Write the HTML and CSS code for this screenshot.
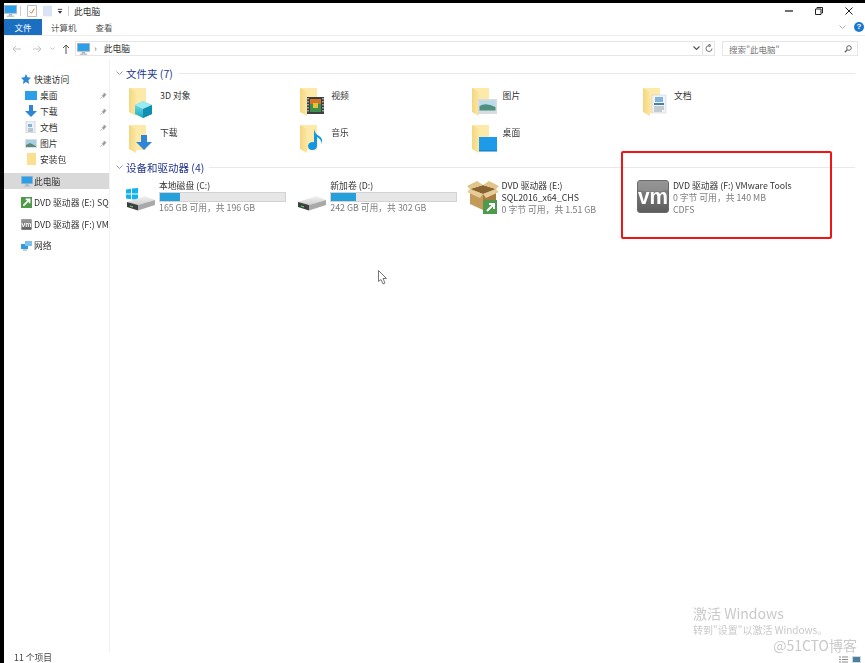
FILE: index.html
```html
<!DOCTYPE html>
<html lang="zh-CN">
<head>
<meta charset="utf-8">
<title>此电脑</title>
<link rel="stylesheet" href="styles.css">
</head>
<body>
<svg class="defs" width="0" height="0" aria-hidden="true">
  <defs>
    <linearGradient id="fy" x1="0" y1="0" x2="1" y2="0"><stop offset="0" stop-color="#f4d67f"/><stop offset="1" stop-color="#fbe6a2"/></linearGradient>
    <linearGradient id="cube" x1="0" y1="0" x2="0" y2="1"><stop offset="0" stop-color="#7fe3ee"/><stop offset="1" stop-color="#18a9c4"/></linearGradient>
    <linearGradient id="vmg" x1="0" y1="0" x2="0" y2="1"><stop offset="0" stop-color="#8a8a8a"/><stop offset="1" stop-color="#5c5c5c"/></linearGradient>
    <linearGradient id="dr" x1="0" y1="0" x2="0" y2="1"><stop offset="0" stop-color="#f2f2f2"/><stop offset="1" stop-color="#cfcfcf"/></linearGradient>
    <symbol id="folder" viewBox="0 0 26 30">
      <path d="M1 0h17v25H7z" fill="#fdeaa9"/>
      <path d="M1 0l7 4v24l-7-4z" fill="url(#fy)"/>
    </symbol>
    <symbol id="pc" viewBox="0 0 14 13">
      <path d="M0 0h14v9.500H0z" fill="#9fb4c6"/>
      <path d="M1 1h12v7.500H1z" fill="#2c9fe8"/>
      <path d="M5 10h4v1.500H5z" fill="#8fa3b4"/>
      <path d="M3 11.500h8V13H3z" fill="#bcc8d2"/>
    </symbol>
    <symbol id="pin" viewBox="0 0 8 8">
      <path d="M4.500.5l3 3-1.200.5-1.300 1.500-.3 1.500-3-3 1.500-.3L4 2.400z" fill="#9a9a9a"/>
      <path d="M2 6L.5 7.500" stroke="#9a9a9a"/>
    </symbol>
    <symbol id="drive" viewBox="0 0 30 16">
      <path d="M1 7L19 1l10 4-17 5z" fill="url(#dr)"/>
      <path d="M1 7l11 3v5.500L1 12z" fill="#3f3f3f"/>
      <path d="M12 10l17-5v5L12 15.500z" fill="#a9a9a9"/>
      <path d="M4 10.500l3 .8v1.300l-3-.8z" fill="#4fd06a"/>
    </symbol>
    <symbol id="vm" viewBox="0 0 32 33">
      <rect x=".5" y=".5" width="31" height="32" rx="2.500" fill="url(#vmg)" stroke="#6a6a6a"/>
      <path d="M1 1h30v9q-15 3-30 0z" fill="#a3a3a3" opacity=".45"/>
      <text x="16" y="24" text-anchor="middle" font-family="Liberation Sans" font-weight="700" font-size="22" fill="#ffffff" textLength="30" lengthAdjust="spacingAndGlyphs">vm</text>
    </symbol>
    <symbol id="box" viewBox="0 0 32 34">
      <path d="M3 9l13 5v16L3 24z" fill="#c49a5a"/>
      <path d="M16 14l13-5v15l-13 6z" fill="#a67c3f"/>
      <path d="M3 9l13-4 13 4-13 5z" fill="#8a6430"/>
      <path d="M3 9L0 6l10-5 6 4zM29 9l3-3-10-5-6 4z" fill="#e2c48a"/>
      <path d="M3 9l13 5-3 4L0 12zM29 9L16 14l3 4 13-6z" fill="#e6cc98"/>
      <rect x="16" y="20" width="14" height="14" fill="#4f9a4a"/>
      <path d="M20 31l6-6M22 24h5v5" stroke="#ffffff" stroke-width="2" fill="none"/>
    </symbol>
    <symbol id="small-arrow" viewBox="0 0 14 14">
      <rect width="14" height="14" fill="#4f9a4a"/>
      <path d="M3 11l7-7M6 3h5v5" stroke="#ffffff" stroke-width="2" fill="none"/>
    </symbol>
  </defs>
</svg>

<div class="blackTop"></div>
<div class="frame">
  <div class="blackLeft"></div>
  <main class="window">
    <header class="titlebar">
      <svg class="qa-pc" width="13" height="12"><use href="#pc"/></svg>
      <span class="sep"></span>
      <svg class="qa-note" width="10" height="12" viewBox="0 0 11 13"><path d="M.5.5h10v12H.5z" fill="#fff" stroke="#b5b5b5"/><path d="M3 7l2 2 3-5" stroke="#d9622b" fill="none"/></svg>
      <svg class="qa-doc" width="9" height="12" viewBox="0 0 11 13"><path d="M0 0h11v13H0z" fill="#d9e3f3"/></svg>
      <svg class="qa-drop" width="6" height="7" viewBox="0 0 7 7"><path d="M1 1h5" stroke="#333"/><path d="M1 3h5L3.500 6z" fill="#333"/></svg>
      <span class="sep sep-2"></span>
      <span class="title">此电脑</span>
      <div class="winctl">
        <svg width="8" height="2" viewBox="0 0 8 2"><path d="M0 1h8" stroke="#222" stroke-width="1.300"/></svg>
        <svg width="8" height="8" viewBox="0 0 8 8"><path d="M2 1.500V.5h5.500V6H6.500M.5 2h5.500v5.500H.5z" fill="none" stroke="#222"/></svg>
        <svg width="8" height="8" viewBox="0 0 8 8"><path d="M.5.500l7 7M7.500.500l-7 7" stroke="#222"/></svg>
      </div>
    </header>
    <nav class="tabs">
      <span class="tab tab-file">文件</span>
      <span class="tab tab-computer">计算机</span>
      <span class="tab tab-view">查看</span>
      <svg class="collapse" width="7" height="5" viewBox="0 0 7 5"><path d="M.5.500l3 3 3-3" fill="none" stroke="#b0b0b0"/></svg>
      <span class="help">?</span>
    </nav>
    <div class="toolbar">
      <svg class="tb-back" width="10" height="8" viewBox="0 0 10 8"><path d="M9 4H1M4 1L1 4l3 3" fill="none" stroke="#c4c4c4"/></svg>
      <svg class="tb-fwd" width="10" height="8" viewBox="0 0 10 8"><path d="M1 4h8M6 1l3 3-3 3" fill="none" stroke="#c4c4c4"/></svg>
      <svg class="tb-down" width="5" height="4" viewBox="0 0 5 4"><path d="M.5.500l2 2 2-2" fill="none" stroke="#c4c4c4"/></svg>
      <svg class="tb-up" width="8" height="10" viewBox="0 0 8 10"><path d="M4 10V1M1 4l3-3 3 3" fill="none" stroke="#555"/></svg>
      <div class="address">
        <svg width="13" height="12"><use href="#pc"/></svg>
        <span class="crumb-sep">›</span>
        <span class="crumb">此电脑</span>
        <svg class="addr-drop" width="7" height="5" viewBox="0 0 7 5"><path d="M.5.500l3 3 3-3" fill="none" stroke="#555" stroke-width="1.200"/></svg>
        <span class="addr-refresh"><svg width="8" height="9" viewBox="0 0 8 9"><path d="M4 1.500a3 3 0 1 0 3 3M4 0v3l2-1.500z" fill="none" stroke="#777"/></svg></span>
      </div>
      <div class="search">
        <span>搜索"此电脑"</span>
        <svg width="8" height="8" viewBox="0 0 8 8"><circle cx="5" cy="3" r="2.300" fill="none" stroke="#666"/><path d="M3.300 4.700L.8 7.300" stroke="#666" stroke-width="1.300"/></svg>
      </div>
    </div>
    <div class="body">
      <aside class="nav">
        <div class="nav-row lvl1">
          <svg class="nav-ic" width="10" height="10" viewBox="0 0 10 10"><path d="M5 0l1.500 3.300L10 3.800 7.400 6.200 8.100 10 5 8.100 1.900 10l.7-3.800L0 3.800l3.500-.5z" fill="#2f86d6"/></svg>
          <span>快速访问</span>
        </div>
        <div class="nav-row lvl2">
          <svg class="nav-ic" width="12" height="9" viewBox="0 0 12 9"><path d="M0 0h12v9H0z" fill="#2c9fe8"/></svg>
          <span>桌面</span>
          <svg class="pin" width="7" height="7"><use href="#pin"/></svg>
        </div>
        <div class="nav-row lvl2">
          <svg class="nav-ic" width="12" height="12" viewBox="0 0 12 12"><path d="M4 0h4v6h4l-6 6-6-6h4z" fill="#2f86d6"/></svg>
          <span>下载</span>
          <svg class="pin" width="7" height="7"><use href="#pin"/></svg>
        </div>
        <div class="nav-row lvl2">
          <svg class="nav-ic" width="11" height="12" viewBox="0 0 11 12"><path d="M1 0h9v12H1z" fill="#eef1f5" stroke="#b5bdc6" stroke-width=".6"/><path d="M3 3h4v3H3z" fill="#7fb4dd"/><path d="M3 8h5M3 10h5" stroke="#8a99a8"/></svg>
          <span>文档</span>
          <svg class="pin" width="7" height="7"><use href="#pin"/></svg>
        </div>
        <div class="nav-row lvl2">
          <svg class="nav-ic" width="12" height="9" viewBox="0 0 12 9"><path d="M0 0h12v9H0z" fill="#d6dde3"/><path d="M1 1h10v5H1z" fill="#a9cfe6"/><path d="M1 6l4-2 6 3v1H1z" fill="#5f8a78"/></svg>
          <span>图片</span>
          <svg class="pin" width="7" height="7"><use href="#pin"/></svg>
        </div>
        <div class="nav-row lvl2">
          <svg class="nav-ic ic-pack" width="9" height="12" viewBox="0 0 9 12"><path d="M0 0h9v12H0z" fill="#fbe08f"/></svg>
          <span>安装包</span>
        </div>
        <div class="nav-row lvl1 selected">
          <svg class="nav-ic" width="12" height="11"><use href="#pc"/></svg>
          <span>此电脑</span>
        </div>
        <div class="nav-row lvl1 dvd-e">
          <svg class="nav-ic" width="11" height="11"><use href="#small-arrow"/></svg>
          <span>DVD 驱动器 (E:) SQL2016_x64_CHS</span>
        </div>
        <div class="nav-row lvl1 dvd-f">
          <svg class="nav-ic" width="11" height="11" viewBox="0 0 32 33"><use href="#vm"/></svg>
          <span>DVD 驱动器 (F:) VMware Tools</span>
        </div>
        <div class="nav-row lvl1 net">
          <svg class="nav-ic" width="11" height="11" viewBox="0 0 11 11"><path d="M0 4h7v5H0z" fill="#2f9be0"/><path d="M4 1h7v5H4z" fill="#7cc0ec"/><path d="M2 10h4" stroke="#8a99a8"/></svg>
          <span>网络</span>
        </div>
      </aside>
      <section class="content">
        <h2 class="group">
          <svg width="7" height="5" viewBox="0 0 7 5"><path d="M.5.500l3 3 3-3" fill="none" stroke="#9a9a9a"/></svg>
          <span class="group-name">文件夹 (7)</span><span class="group-line"></span>
        </h2>
        <div class="grid folders">
          <div class="tile"><svg class="fi" width="26" height="30" viewBox="0 0 26 30"><use href="#folder" width="26" height="30"/><path d="M7 17l8-4 9 4v9l-9 4-8-4z" fill="url(#cube)"/><path d="M7 17l8 4 9-4-9-4z" fill="#9beaf0"/><path d="M15 21v9l9-4v-9z" fill="#0f8eb0"/></svg><span class="label">3D 对象</span></div>
          <div class="tile"><svg class="fi" width="26" height="30" viewBox="0 0 26 30"><use href="#folder" width="26" height="30"/><rect x="8" y="9" width="17" height="17" fill="#3b3f3f"/><path d="M11 11h11v13H11z" fill="#3f8f4a"/><path d="M11 11h11v5H11z" fill="#d4762a"/><path d="M14 15h5v5h-5z" fill="#e6c23a"/><path d="M9 10v15M24 10v15" stroke="#c8c8c8" stroke-width="1.400" stroke-dasharray="1.500 1.500"/></svg><span class="label">视频</span></div>
          <div class="tile"><svg class="fi" width="26" height="30" viewBox="0 0 26 30"><use href="#folder" width="26" height="30"/><rect x="7" y="11" width="19" height="15" fill="#d9dcdf"/><rect x="8.500" y="12.500" width="16" height="10" fill="#bcdbe8"/><path d="M8.500 18q6-4 16 1v3.500h-16z" fill="#4f8f7e"/></svg><span class="label">图片</span></div>
          <div class="tile"><svg class="fi" width="26" height="30" viewBox="0 0 26 30"><use href="#folder" width="26" height="30"/><path d="M10 7h14v18H10z" fill="#f1f3f6" stroke="#c3c9cf" stroke-width=".5"/><path d="M13 9h8v5h-8z" fill="#7fb4dd"/><path d="M12 15h10v2H12z" fill="#4a7f9e"/><path d="M12 19h10M12 21h10M12 23h8" stroke="#97a3ae"/></svg><span class="label">文档</span></div>
          <div class="tile"><svg class="fi" width="26" height="30" viewBox="0 0 26 30"><use href="#folder" width="26" height="30"/><path d="M13 10h6v7h5l-8 8-8-8h5z" fill="#2f86d6"/></svg><span class="label">下载</span></div>
          <div class="tile"><svg class="fi" width="26" height="30" viewBox="0 0 26 30"><use href="#folder" width="26" height="30"/><path d="M18 4v17a4.500 4 0 1 1-3-3.700V4q1 5 5 7t3 8q-1-5-5-7z" fill="#1097e6"/></svg><span class="label">音乐</span></div>
          <div class="tile"><svg class="fi" width="26" height="30" viewBox="0 0 26 30"><use href="#folder" width="26" height="30"/><path d="M8 12h19v14H8z" fill="#1e9be8"/><path d="M8 26h19" stroke="#0d75bd"/></svg><span class="label">桌面</span></div>
        </div>
        <h2 class="group group-2">
          <svg width="7" height="5" viewBox="0 0 7 5"><path d="M.5.500l3 3 3-3" fill="none" stroke="#9a9a9a"/></svg>
          <span class="group-name">设备和驱动器 (4)</span><span class="group-line"></span>
        </h2>
        <div class="grid drives">
          <div class="drive">
            <div class="dicon">
              <svg class="winlogo" width="12" height="12" viewBox="0 0 12 12"><path d="M0 1.500l5-.8V5.500H0zM6 .6L12 0v5.500H6zM0 6.500h5v4.800l-5-.8zM6 6.500h6V12l-6-.8z" fill="#12b3ea"/></svg>
              <svg class="dsvg" width="30" height="16"><use href="#drive"/></svg>
            </div>
            <div class="dtext">
              <div class="dname">本地磁盘 (C:)</div>
              <div class="bar"><span class="fill fill-c"></span></div>
              <div class="dsub">165 GB 可用，共 196 GB</div>
            </div>
          </div>
          <div class="drive">
            <div class="dicon">
              <svg class="dsvg" width="30" height="16"><use href="#drive"/></svg>
            </div>
            <div class="dtext">
              <div class="dname">新加卷 (D:)</div>
              <div class="bar"><span class="fill fill-d"></span></div>
              <div class="dsub">242 GB 可用，共 302 GB</div>
            </div>
          </div>
          <div class="drive">
            <div class="dicon"><svg class="box" width="32" height="34"><use href="#box"/></svg></div>
            <div class="dtext lines">
              <div class="dname">DVD 驱动器 (E:)</div>
              <div class="dname">SQL2016_x64_CHS</div>
              <div class="dsub">0 字节 可用，共 1.51 GB</div>
            </div>
          </div>
          <div class="drive">
            <div class="dicon"><svg class="vmi" width="32" height="33"><use href="#vm"/></svg></div>
            <div class="dtext lines">
              <div class="dname">DVD 驱动器 (F:) VMware Tools</div>
              <div class="dsub">0 字节 可用，共 140 MB</div>
              <div class="dsub">CDFS</div>
            </div>
          </div>
        </div>
      </section>
    </div>
    <footer class="status">11 个项目</footer>
  </main>
</div>

<div class="redbox"></div>
<svg class="cursor" width="10" height="15" viewBox="0 0 10 15"><path d="M.5.500v11l2.500-2 2 4.500 2-1-2-4.500h3.500z" fill="#fff" stroke="#777"/></svg>
<div class="watermark">
  <div class="wm-1">激活 Windows</div>
  <div class="wm-2">转到"设置"以激活 Windows。</div>
  <div class="wm-3">@51CTO博客</div>
</div>
<div class="viewbtns">
  <svg width="9" height="7" viewBox="0 0 9 7"><path d="M0 1h2M3 1h6M0 3.500h2M3 3.500h6M0 6h2M3 6h6" stroke="#8a8a8a"/></svg>
  <svg width="9" height="7" viewBox="0 0 9 7"><path d="M0 0h9v7H0z" fill="#d2d8de"/><path d="M1 1h7v5H1z" fill="#4a7f9e"/></svg>
</div>
</body>
</html>
```

FILE: styles.css
```css
* { box-sizing: border-box; }
html, body { margin: 0; padding: 0; height: 100%; overflow: hidden; background: #fff; }
body {
  position: relative;
  width: 865px;
  height: 663px;
  font-family: "Noto Sans CJK SC", "Liberation Sans", sans-serif;
  font-size: 9px;
  color: #333;
}
.defs { position: absolute; }
svg { display: block; flex: none; }
.blackTop { height: 3px; background: #000; }
.frame { display: flex; height: 660px; filter: blur(.4px); }
.blackLeft { width: 4px; background: #000; flex: none; }
.window { flex: 1; display: flex; flex-direction: column; min-width: 0; background: #fff; }

.titlebar { height: 16px; display: flex; align-items: center; }
.sep { width: 1px; height: 10px; background: #cfcfcf; margin-left: 3px; }
.qa-note { margin-left: 6px; }
.qa-doc { margin-left: 6px; }
.qa-drop { margin-left: 5px; }
.sep-2 { margin-left: 5px; }
.title { margin-left: 5px; font-size: 8.800px; }
.winctl { margin-left: auto; display: flex; align-items: center; gap: 22px; margin-right: 12px; }

.tabs { height: 17px; display: flex; align-items: center; border-bottom: 1px solid #ececec; }
.tab { font-size: 8.500px; color: #555; }
.tab-file { width: 38px; height: 16px; background: #1a6fc0; color: #fff; text-align: center; line-height: 16px; }
.tab-computer { margin-left: 9px; }
.tab-view { margin-left: 19px; }
.collapse { margin-left: auto; margin-right: 8px; }
.help { width: 10px; height: 10px; margin-right: 1px; border-radius: 50%; background: #1a78d2; color: #fff; font: 700 8px/10px "Liberation Sans", sans-serif; text-align: center; }

.toolbar { height: 24px; display: flex; align-items: center; padding-top: 1px; }
.tb-back { margin-left: 8px; }
.tb-fwd { margin-left: 10px; }
.tb-down { margin-left: 8px; }
.tb-up { margin-left: 7px; }
.address { margin-left: 5px; width: 640px; height: 15px; border: 1px solid #e6e6e6; display: flex; align-items: center; padding-left: 1px; }
.crumb-sep { margin-left: 4px; color: #777; font-size: 9px; }
.crumb { margin-left: 7px; font-size: 8.800px; }
.addr-drop { margin-left: auto; margin-right: 2px; }
.addr-refresh { width: 12px; height: 13px; border-left: 1px solid #e6e6e6; display: flex; align-items: center; justify-content: center; }
.search { margin-left: 7px; width: 136px; height: 15px; border: 1px solid #e6e6e6; display: flex; align-items: center; justify-content: space-between; padding: 0 5px 0 6px; color: #777; font-size: 8.500px; }

.body { flex: 1; display: flex; min-height: 0; }
.nav { width: 106px; flex: none; padding-top: 11px; border-right: 1px solid #f2f2f2; overflow: hidden; }
.nav-row { height: 16px; display: flex; align-items: center; white-space: nowrap; overflow: hidden; font-size: 8.800px; position: relative; }
.nav-row .nav-ic { position: absolute; }
.lvl1 { padding-left: 30px; }
.lvl1 .nav-ic { left: 17px; }
.lvl2 { padding-left: 36px; }
.lvl2 .nav-ic { left: 21px; }
.lvl2 .ic-pack { left: 23px; }
.pin { position: absolute; left: 96px; top: 5px; }
.selected { margin-top: 6px; background: #d9d9d9; }
.dvd-e { margin-top: 5px; }
.dvd-f { margin-top: 6px; }
.net { margin-top: 5px; }

.content { flex: 1; min-width: 0; padding: 6px 10px 0 16px; }
.group { margin: 0 0 0 -10px; height: 14px; display: flex; align-items: center; font-weight: 400; }
.group-name { margin-left: 3px; font-size: 10.500px; color: #24368f; }
.group-line { flex: 1; height: 1px; margin-left: 5px; background: #e8e8e8; }
.grid { display: grid; grid-template-columns: repeat(4, 171.300px); }
.folders { margin-top: 6px; grid-auto-rows: 37px; }
.tile { display: flex; align-items: flex-start; padding: 2px 0 0 2px; position: relative; }
.label { position: absolute; left: 34px; top: 3px; font-size: 8.800px; line-height: 13px; }
.drives { margin-top: 5px; }
.drive { display: flex; height: 38px; }
.dicon { width: 33px; flex: none; position: relative; }
.winlogo { position: absolute; left: 0; top: 9px; }
.dsvg { position: absolute; left: 0; top: 16px; }
.box { position: absolute; left: -2px; top: 1px; }
.vmi { position: absolute; left: -3px; top: 1px; }
.dtext { flex: 1; min-width: 0; padding-top: 1px; }
.dname { font-size: 8.800px; line-height: 12px; white-space: nowrap; }
.dsub { font-size: 8.800px; line-height: 12px; color: #7d7d7d; white-space: nowrap; }
.bar { width: 127px; height: 10px; background: #e6e6e6; border: 1px solid #d2d2d2; }
.fill { display: block; height: 100%; background: #26a0da; }
.fill-c { width: 20px; }
.fill-d { width: 25px; }

.status { height: 11px; margin-top: auto; padding-left: 10px; font-size: 8.800px; line-height: 11px; color: #444; }

.redbox { position: absolute; left: 621px; top: 151px; width: 211px; height: 88px; border: 2px solid #f01414; border-radius: 2px; }
.cursor { position: absolute; left: 378px; top: 270px; }
.watermark { position: absolute; left: 693px; top: 604px; width: 164px; color: #c9c9c9; }
.wm-1 { font-size: 14px; line-height: 18px; }
.wm-2 { font-size: 10px; line-height: 13px; margin-top: 1px; }
.wm-3 { font-size: 14px; line-height: 18px; text-align: right; }
.viewbtns { position: absolute; right: 4px; top: 656px; display: flex; gap: 4px; }
```
